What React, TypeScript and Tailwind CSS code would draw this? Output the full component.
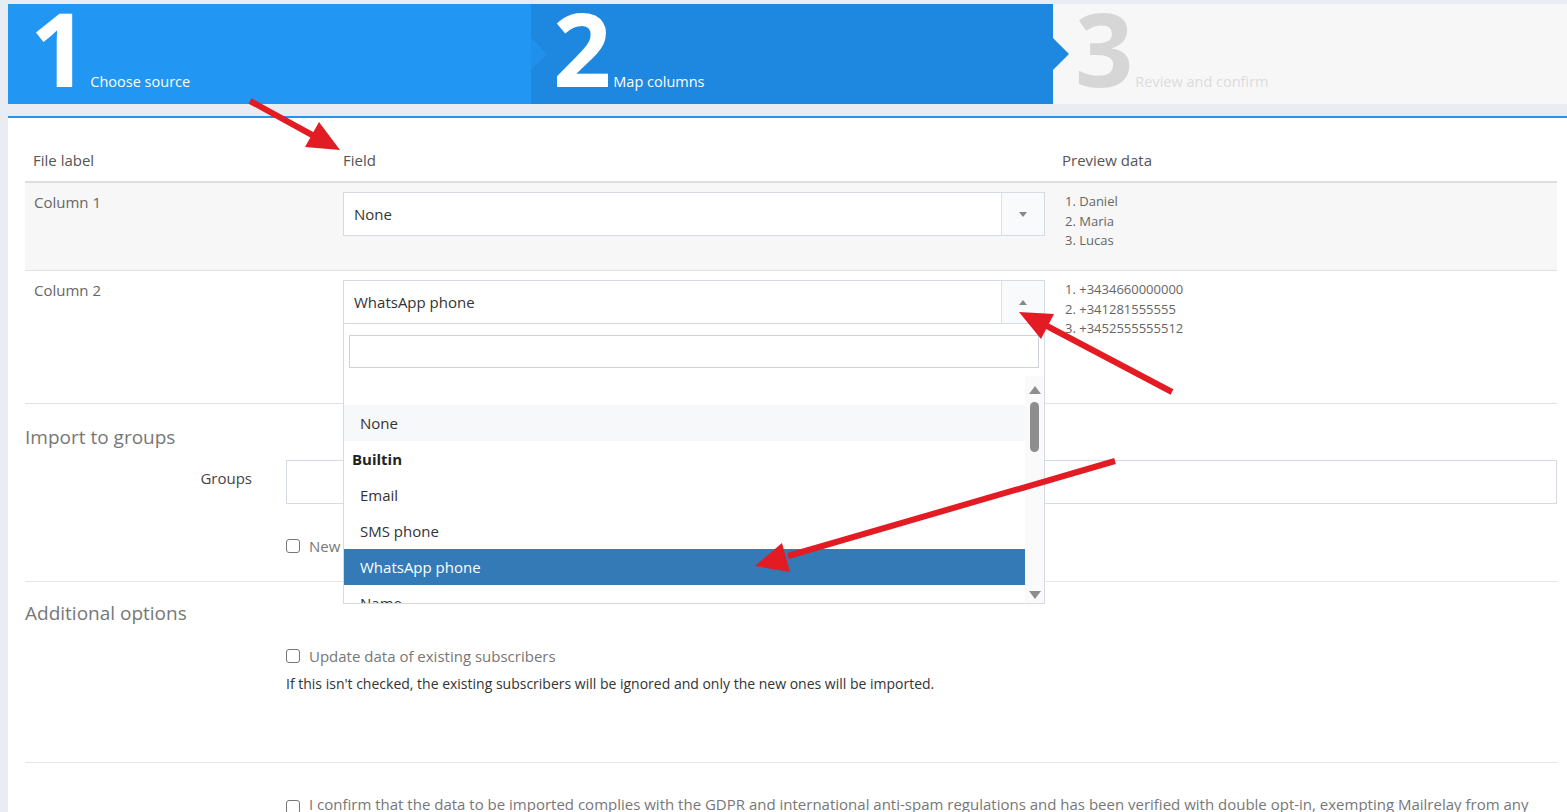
import React from "react";

const preview1 = ["1. Daniel", "2. Maria", "3. Lucas"];
const preview2 = ["1. +3434660000000", "2. +341281555555", "3. +3452555555512"];

type StepProps = {
  num: string;
  label: string;
  box: string;
  numColor: string;
  labelColor: string;
  notch?: string;
};

const Step = ({ num, label, box, numColor, labelColor, notch }: StepProps) => (
  <div className={`relative flex h-full items-baseline pl-[22px] ${box}`}>
    {notch && (
      <span className={`absolute left-0 top-[34px] h-0 w-0 border-y-[16px] border-l-[16px] border-y-transparent ${notch}`} />
    )}
    <span className={`text-[102px] font-bold leading-[87px] ${numColor}`}>{num}</span>
    <span className={`ml-[2px] text-[14.5px] ${labelColor}`}>{label}</span>
  </div>
);

const Caret = ({ up }: { up?: boolean }) =>
  up ? (
    <span className="h-0 w-0 border-x-[4px] border-b-[5px] border-x-transparent border-b-[#888]" />
  ) : (
    <span className="h-0 w-0 border-x-[4px] border-t-[5px] border-x-transparent border-t-[#888]" />
  );

const Checkbox = () => (
  <span className="inline-block h-[14px] w-[14px] shrink-0 rounded-[3px] border border-[#767676] bg-white" />
);

const FieldSelect = ({ value, open }: { value: string; open?: boolean }) => (
  <div className="relative">
    <div className="flex h-[44px] items-stretch border border-[#d5dae3] bg-white">
      <div className="flex flex-1 items-center pl-[10px] text-[15px] text-[#333]">{value}</div>
      <div className="flex w-[43px] items-center justify-center border-l border-[#dde1e8] bg-[#f9fafb]">
        <Caret up={open} />
      </div>
    </div>
    {open && (
      <div className="absolute left-0 right-0 top-full z-10 -mt-px border border-[#d5dae3] bg-white">
        <div className="mx-[5px] mt-[11px] h-[33px] border border-[#ccd1da] bg-white" />
        <div className="mt-[8px] flex h-[227px] overflow-hidden">
          <div className="flex-1 text-[15px] text-[#333]">
            <div className="h-[29px]" />
            <div className="flex h-[36px] items-center bg-[#f7f8fa] pl-[16px]">None</div>
            <div className="flex h-[36px] items-center pl-[8px] font-bold text-[#222]">Builtin</div>
            <div className="flex h-[36px] items-center pl-[16px]">Email</div>
            <div className="flex h-[36px] items-center pl-[16px]">SMS phone</div>
            <div className="flex h-[36px] items-center bg-[#337ab7] pl-[16px] text-white">WhatsApp phone</div>
            <div className="flex h-[36px] items-center pl-[16px]">Name</div>
          </div>
          <div className="flex w-[19px] flex-col items-center bg-[#fafafa]">
            <span className="mt-[10px] h-0 w-0 border-x-[6px] border-b-[8px] border-x-transparent border-b-[#8e8e8e]" />
            <span className="mt-[8px] h-[50px] w-[9px] rounded-full bg-[#8e8e8e]" />
            <span className="mb-[4px] mt-auto h-0 w-0 border-x-[6px] border-t-[8px] border-x-transparent border-t-[#8e8e8e]" />
          </div>
        </div>
      </div>
    )}
  </div>
);

// red call-out arrows drawn on top of the form
const Arrows = () => (
  <svg className="pointer-events-none absolute left-0 top-0 z-20" width="1567" height="812" viewBox="0 0 1567 812">
    <g fill="#e31b23" stroke="#e31b23" strokeWidth="6">
      <line x1="250" y1="101" x2="314" y2="136" />
      <polygon stroke="none" points="340,150 305,147 319,122" />
      <line x1="1172" y1="392" x2="1045" y2="325" />
      <polygon stroke="none" points="1019,312 1054,314 1041,339" />
      <line x1="1115" y1="461" x2="788" y2="556" />
      <polygon stroke="none" points="755,566 782,543 790,572" />
    </g>
  </svg>
);

export default function App() {
  return (
    <div className="relative h-[812px] overflow-hidden bg-[#e9ecf3] pl-2 pt-1 font-['Open_Sans',sans-serif]">
      <div className="flex h-[100px]">
        <Step num="1" label="Choose source" box="w-[523px] bg-[#2196f3]" numColor="text-white" labelColor="text-white" />
        <Step
          num="2"
          label="Map columns"
          box="w-[522px] bg-[#1e88e0]"
          numColor="text-white"
          labelColor="text-white"
          notch="border-l-[#2190ec]"
        />
        <Step
          num="3"
          label="Review and confirm"
          box="flex-1 bg-[#f7f7f7]"
          numColor="text-[#d6d6d6]"
          labelColor="text-[#dcdcdc]"
          notch="border-l-[#1e88e0]"
        />
      </div>

      <div className="mt-[12px] border-t-2 border-[#2196f3] bg-white pl-[17px] pr-[10px]">
        {/* column mapping table */}
        <div className="grid h-[65px] grid-cols-[310px_718px_1fr] items-end border-b-2 border-[#dedede] pb-[10px] text-[15px] leading-[22px] text-[#555]">
          <div className="px-[8px]">File label</div>
          <div className="px-[8px]">Field</div>
          <div className="px-[9px]">Preview data</div>
        </div>
        <div className="grid h-[88px] grid-cols-[310px_718px_1fr] border-b border-[#e0e0e0] bg-[#f7f7f7] pt-[8px]">
          <div className="px-[9px] text-[15px] leading-[22px] text-[#666]">Column 1</div>
          <div className="px-[8px] pt-[1px]">
            <FieldSelect value="None" />
          </div>
          <div className="pl-[12px] pt-[1px] text-[13px] leading-[19.5px] text-[#666]">
            {preview1.map((p) => (
              <div key={p}>{p}</div>
            ))}
          </div>
        </div>
        <div className="grid h-[133px] grid-cols-[310px_718px_1fr] border-b border-[#e0e0e0] pt-[8px]">
          <div className="px-[9px] text-[15px] leading-[22px] text-[#666]">Column 2</div>
          <div className="px-[8px] pt-[1px]">
            <FieldSelect value="WhatsApp phone" open />
          </div>
          <div className="pl-[12px] pt-[1px] text-[13px] leading-[19.5px] text-[#666]">
            {preview2.map((p) => (
              <div key={p}>{p}</div>
            ))}
          </div>
        </div>

        {/* import to groups */}
        <div className="h-[178px] border-b border-[#e6e6e6] pt-[19px]">
          <div className="text-[19px] leading-[28px] text-[#777]">Import to groups</div>
          <div className="mt-[9px] flex h-[44px] items-start">
            <div className="w-[261px] pr-[34px] pt-[7px] text-right text-[15px] leading-[22px] text-[#444]">Groups</div>
            <div className="h-[44px] flex-1 border border-[#d5dae3] bg-white" />
          </div>
          <div className="ml-[261px] mt-[31px] flex h-[22px] items-center gap-[9px] text-[15px] text-[#777]">
            <Checkbox />
            <span>New group</span>
          </div>
        </div>

        {/* additional options */}
        <div className="h-[181px] border-b border-[#e6e6e6] pt-[17px]">
          <div className="text-[19px] leading-[28px] text-[#777]">Additional options</div>
          <div className="ml-[261px] mt-[18px] flex h-[22px] items-center gap-[9px] text-[15px] text-[#777]">
            <Checkbox />
            <span>Update data of existing subscribers</span>
          </div>
          <div className="ml-[261px] mt-[7px] text-[14px] leading-[20px] text-[#333]">
            If this isn't checked, the existing subscribers will be ignored and only the new ones will be imported.
          </div>
        </div>

        {/* consent */}
        <div className="pt-[30px]">
          <label className="ml-[261px] flex items-start gap-[9px] text-[15px] leading-[22px] text-[#777]">
            <span className="pt-[4px]">
              <Checkbox />
            </span>
            <span>
              I confirm that the data to be imported complies with the GDPR and international anti-spam regulations and
              has been verified with double opt-in, exempting Mailrelay from any responsibility.
            </span>
          </label>
        </div>
      </div>

      <Arrows />
    </div>
  );
}
